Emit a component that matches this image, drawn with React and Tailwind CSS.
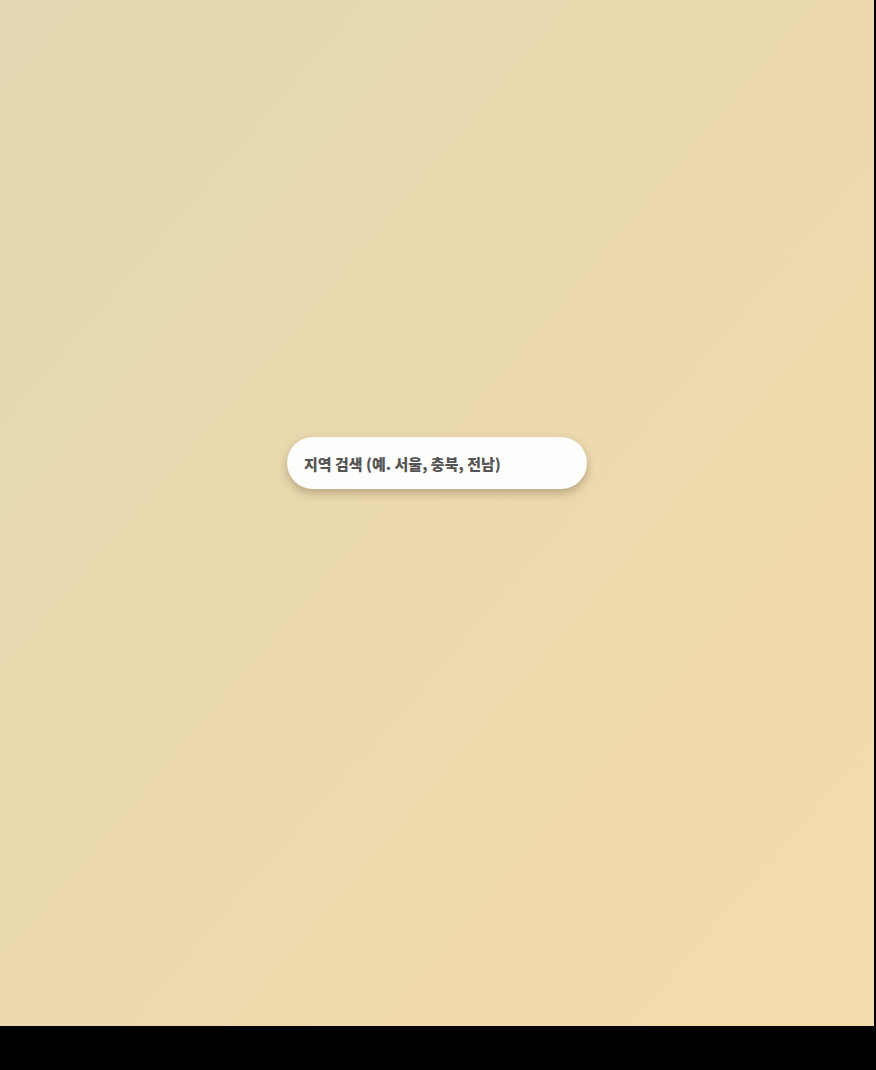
import React from 'react';

const App = () => {
    return (
        <div className="w-full h-[1070px] bg-black">
            <div className="w-[874px] h-[1026px] bg-gradient-to-br from-[#e2d9b2] via-[#ecd9ae] to-[#f4dbab] flex justify-center pt-[437px]">
                <input
                    type="text"
                    placeholder="지역 검색 (예. 서울, 충북, 전남)"
                    className="w-[300px] h-[52px] rounded-full bg-[#fdfdfb] px-[17px] text-[15px] font-black text-[#4d4d4d] placeholder:text-[#555555] shadow-[0_4px_10px_rgba(120,100,70,0.45)] outline-none"
                    style={{ fontFamily: '"Noto Sans CJK KR", "Noto Sans", sans-serif' }}
                />
            </div>
        </div>
    );
};

export default App;
